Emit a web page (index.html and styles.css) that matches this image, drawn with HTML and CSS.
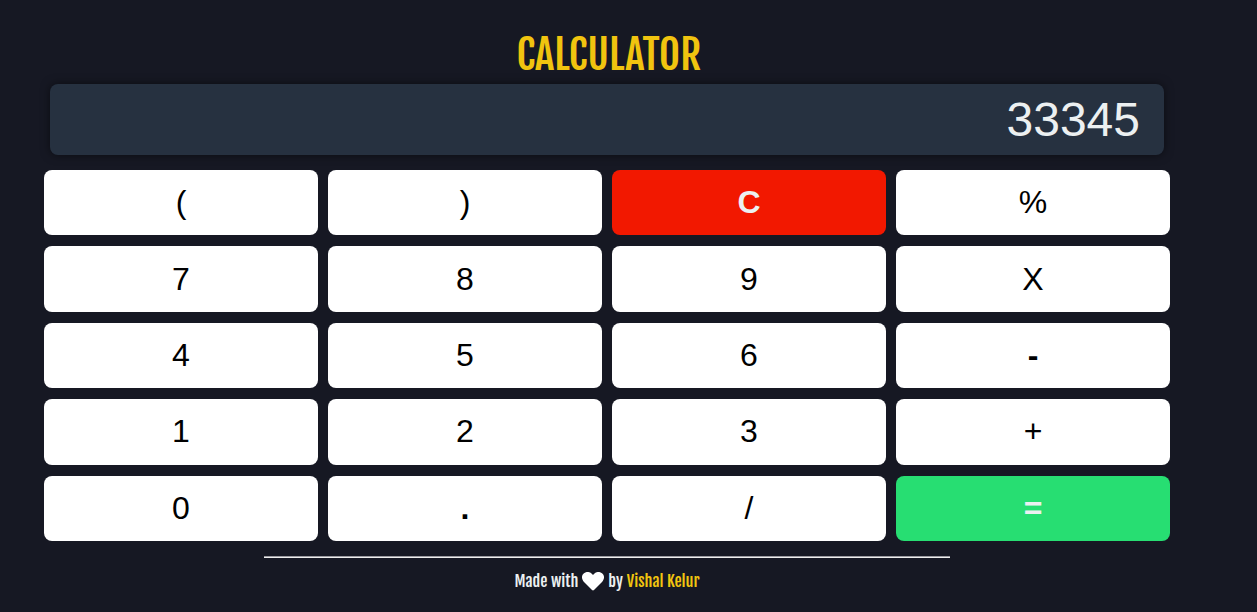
FILE: index.html
```html
<!DOCTYPE html>
<html lang="en">
<head>
<meta charset="utf-8">
<meta name="viewport" content="width=device-width, initial-scale=1">
<title>Calculator</title>
<link rel="stylesheet" href="styles.css">
</head>
<body>
<main class="calculator">
  <h1 class="title">CALCULATOR</h1>
  <input class="display" type="text" value="33345" aria-label="Result" readonly>
  <div class="keys">
    <button class="key" type="button">(</button>
    <button class="key" type="button">)</button>
    <button class="key key-clear" type="button">C</button>
    <button class="key" type="button">%</button>
    <button class="key" type="button">7</button>
    <button class="key" type="button">8</button>
    <button class="key" type="button">9</button>
    <button class="key" type="button">X</button>
    <button class="key" type="button">4</button>
    <button class="key" type="button">5</button>
    <button class="key" type="button">6</button>
    <button class="key key-bold" type="button">-</button>
    <button class="key" type="button">1</button>
    <button class="key" type="button">2</button>
    <button class="key" type="button">3</button>
    <button class="key" type="button">+</button>
    <button class="key" type="button">0</button>
    <button class="key key-bold" type="button">.</button>
    <button class="key" type="button">/</button>
    <button class="key key-equals" type="button">=</button>
  </div>
  <hr class="divider">
  <footer class="credit">
    <span>Made with</span>
    <svg class="heart" viewBox="0 0 22 19" role="img" aria-label="love"><path d="M10 18 2 10C-.8 7-.6 3.200 2 1.200 4.600-.8 7.700-.3 9.800 1.800L11 3l1.200-1.200c2.100-2.100 5.200-2.600 7.800-.6 2.600 2 2.800 5.800 0 8.800l-8 8q-1 .9-2 0z"/></svg>
    <span>by</span>
    <a class="author" href="#">Vishal Kelur</a>
  </footer>
</main>
</body>
</html>
```
FILE: styles.css
```css
* {
  box-sizing: border-box;
}

body {
  margin: 0;
  background: #161823;
  color: #ecf0f1;
  font-family: "Liberation Sans", Arial, sans-serif;
}

.calculator {
  display: flex;
  flex-direction: column;
  margin: 0 87px 0 44px;
  padding-top: 26px;
}

.title {
  margin: 0;
  padding-left: 4px;
  color: #f1c40f;
  font-family: "Fjalla One", "Roboto Condensed", "Liberation Sans Narrow", sans-serif;
  font-size: 41px;
  font-weight: 400;
  line-height: 58px;
  text-align: center;
}

.display {
  height: 71px;
  margin: 0 6px 15px;
  padding: 0 24px;
  border: 0;
  border-radius: 8px;
  background: #263140;
  box-shadow: 0 0 10px rgba(0, 0, 0, 0.5);
  color: #ecf0f1;
  font-family: inherit;
  font-size: 48px;
  text-align: right;
}

.keys {
  display: grid;
  grid-template-columns: repeat(4, 1fr);
  grid-auto-rows: 1fr;
  gap: 11px 10px;
  min-height: 371px;
}

.key {
  padding: 0;
  border: 0;
  border-radius: 8px;
  background: #fff;
  color: #000;
  font-family: inherit;
  font-size: 32px;
}

.key-bold {
  font-weight: 700;
}

.key-clear {
  background: #f21800;
  color: #ecf0f1;
  font-weight: 700;
}

.key-equals {
  background: #27de72;
  color: #ecf0f1;
  font-weight: 700;
}

.divider {
  width: 61%;
  height: 2px;
  margin: 15px auto 11px;
  border: 0;
  border-top: 1px solid #9a9a9f;
  background: #eee;
}

.credit {
  display: flex;
  align-items: center;
  justify-content: center;
  gap: 4px;
  font-family: "Fjalla One", "Roboto Condensed", "Liberation Sans Narrow", sans-serif;
  font-size: 16px;
  font-weight: 400;
  line-height: 24px;
}

.heart {
  width: 22px;
  height: 19px;
  fill: #fff;
}

.author {
  color: #f1c40f;
  text-decoration: none;
}
```
